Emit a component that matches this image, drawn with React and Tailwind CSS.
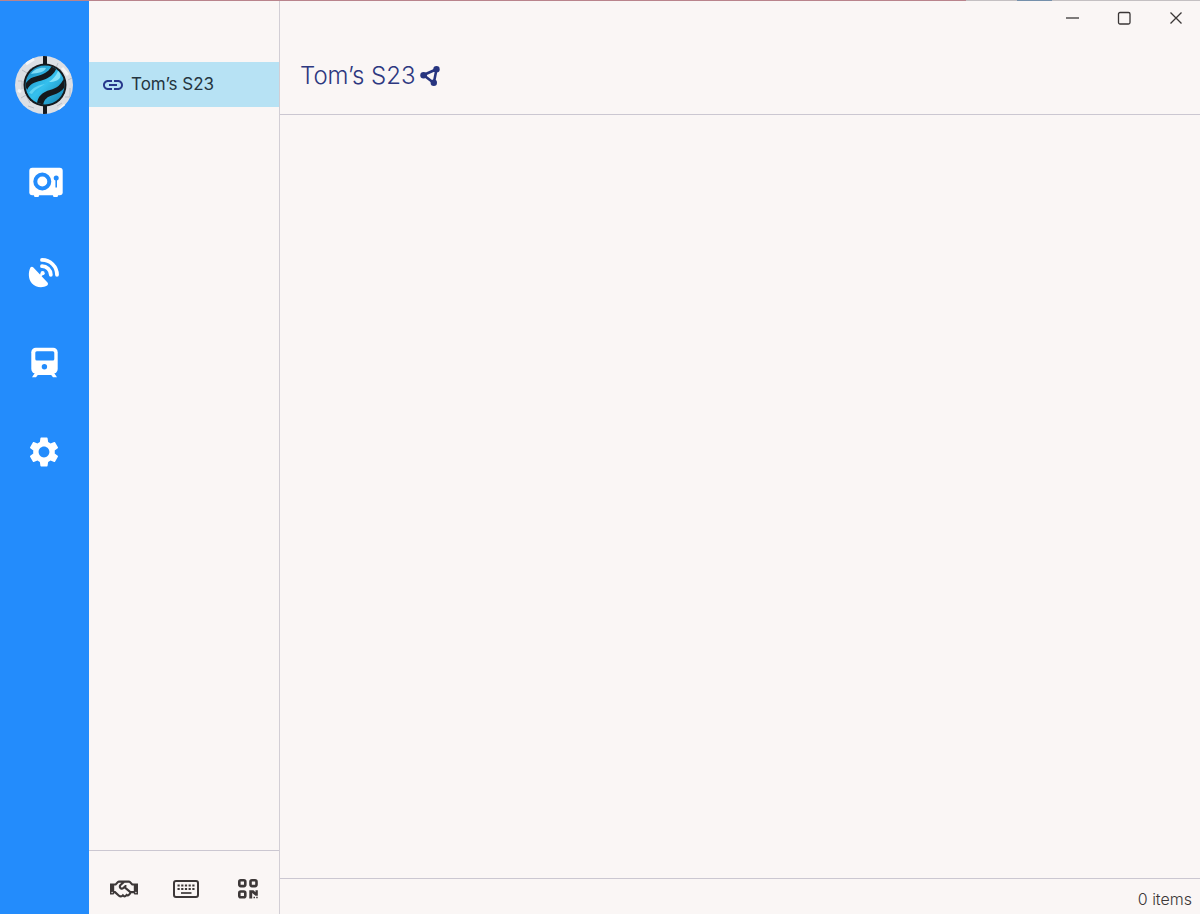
import { useState } from 'react'
import { FaRegHandshake } from 'react-icons/fa'
import { MdLink, MdSettings } from 'react-icons/md'

function Avatar() {
  return (
    <svg viewBox="0 0 58 58" className="size-[58px]" aria-hidden="true">
      <defs>
        <linearGradient id="orb" x1="0" y1="0" x2="1" y2="1">
          <stop offset="0" stopColor="#1687b8" />
          <stop offset="0.5" stopColor="#35c0ee" />
          <stop offset="1" stopColor="#127dac" />
        </linearGradient>
        <clipPath id="disc">
          <circle cx="29" cy="29" r="29" />
        </clipPath>
        <clipPath id="ball">
          <circle cx="30" cy="29" r="19.5" />
        </clipPath>
      </defs>
      <g clipPath="url(#disc)">
        <rect width="58" height="58" fill="#dcdfe4" />
        <path d="M7 14l5 3 4-5M3 25h4v8M6 42l5-3 4 8M43 7l-2 5 8 3M53 24l4-2M55 32v9h-5M42 50l5-3M13 50l6 2" fill="none" stroke="#b9bdc5" strokeWidth="1" />
        <path d="M11 8l8-5M3 34l3 2M47 12l6 7M44 54l6-5" stroke="#f4f5f7" strokeWidth="3" />
        <rect x="28" y="0" width="4" height="58" fill="#15191d" />
      </g>
      <circle cx="30" cy="29" r="21.5" fill="#15191d" />
      <g clipPath="url(#ball)">
        <rect x="10" y="9" width="40" height="40" fill="url(#orb)" />
        <path d="M10 29C14 20 22 21 28 18C32 16 35 14 37 9L42 11C39 19 34 22 28 24C22 26 16 26 12 34Z" fill="#15191d" />
        <path d="M22 49C22 40 28 36 35 34C42 32 46 29 49 22L52 27C49 34 44 37 38 39C32 41 29 43 28 50Z" fill="#15191d" />
        <path d="M16 18c3-5 9-7 15-6-1 4-8 5-15 6Z" fill="#7fdcf7" />
        <path d="M34 26c4-3 7-6 9-11 5 4 3 11-9 11Z" fill="#83e3fb" />
        <path d="M14 37c4-6 10-8 16-9-4 3-9 4-13 10Z" fill="#61d2f3" />
      </g>
    </svg>
  )
}

function SafeIcon() {
  return (
    <svg viewBox="9 7 40 40" className="size-10" aria-hidden="true">
      <path d="M18.500 39h6l-1 3h-4zM37.500 39h6l-1 3h-4z" fill="#fff" />
      <rect x="14.300" y="12.700" width="33.400" height="27.600" rx="3" fill="#fff" />
      <circle cx="27.300" cy="26.500" r="7" fill="none" stroke="#238cfc" strokeWidth="4" />
      <circle cx="41.200" cy="23" r="2.500" fill="#238cfc" />
      <path d="M41.200 23v9.500" stroke="#238cfc" strokeWidth="1.600" />
    </svg>
  )
}

function DishIcon() {
  return (
    <svg viewBox="9 7 40 40" className="size-10" aria-hidden="true">
      <path d="M15.400 22.600C16.200 21.600 17.500 21.600 18.400 22.500L32.500 37.600C33.300 38.600 33.100 39.900 32.100 40.600C27.500 43.200 20.500 42.500 17 38.500C13.300 34.500 13 27.500 15.400 22.600Z" fill="#fff" />
      <path d="M23.500 33l4-4.500" stroke="#fff" strokeWidth="2.200" />
      <circle cx="27.600" cy="28.200" r="2.100" fill="#fff" />
      <path d="M27 14.900A14.900 14.900 0 0 1 42 29.800M27 21.200A8.800 8.800 0 0 1 35.800 29.800" fill="none" stroke="#fff" strokeWidth="3.800" strokeLinecap="round" />
    </svg>
  )
}

function TrainIcon() {
  return (
    <svg viewBox="9 7 40 40" className="size-10" aria-hidden="true">
      <path d="M20.500 37L17 42.200h4l1.800-2.200h13.400l1.800 2.200h4L38.500 37z" fill="#fff" />
      <rect x="16.300" y="12.700" width="26.400" height="25.800" rx="4.500" fill="#fff" />
      <rect x="20.300" y="16.300" width="19" height="9.300" rx="1.500" fill="#238cfc" />
      <circle cx="29.400" cy="31.800" r="2.700" fill="#238cfc" />
    </svg>
  )
}

function GearIcon() {
  return <MdSettings className="size-9 text-white" aria-hidden="true" />
}

function NodesIcon() {
  return (
    <svg viewBox="0 0 20 20" className="size-5 text-[#27347f]" aria-hidden="true">
      <path d="M3.500 9L16.500 3.200L13.800 17z" fill="none" stroke="currentColor" strokeWidth="2.600" />
      <circle cx="3.600" cy="9.200" r="3.300" fill="currentColor" />
      <circle cx="16.500" cy="3.300" r="3.200" fill="currentColor" />
      <circle cx="13.800" cy="16.700" r="3.200" fill="currentColor" />
    </svg>
  )
}

function KeyboardIcon() {
  return (
    <svg viewBox="0 0 26 18" className="h-[18px] w-[26px]" fill="none" stroke="currentColor" aria-hidden="true">
      <rect x="1" y="1" width="24" height="16" rx="2" strokeWidth="2" />
      <path d="M4.500 5.500h17M4.500 9h17" strokeWidth="2" strokeDasharray="2.200 1.500" />
      <path d="M8 13h10.500" strokeWidth="1.700" />
    </svg>
  )
}

function QrIcon() {
  return (
    <svg viewBox="0 0 20 20" className="size-5" fill="none" stroke="currentColor" aria-hidden="true">
      <g strokeWidth="2.600">
        <rect x="1.300" y="1.300" width="6" height="5.800" rx="1.500" />
        <rect x="12.500" y="1.300" width="6" height="5.800" rx="1.500" />
        <rect x="1.300" y="12.500" width="6" height="5.800" rx="1.500" />
      </g>
      <path d="M11.300 11.200h4.200l2 2v-2h2.300v5.500h-2.300l-3.300-2.600v5.400h-2.900z" fill="currentColor" stroke="none" />
      <path d="M15.500 18.500h1.500M18.200 18.500h1.500" strokeWidth="1.500" />
    </svg>
  )
}

const sections = [
  { id: 'vault', label: 'Vault', Icon: SafeIcon },
  { id: 'discover', label: 'Discover', Icon: DishIcon },
  { id: 'transfer', label: 'Transfer', Icon: TrainIcon },
  { id: 'settings', label: 'Settings', Icon: GearIcon },
]

const devices = [{ id: 1, name: 'Tom’s S23', items: 0 }]

function Sidebar() {
  return (
    <nav className="flex w-[89px] shrink-0 flex-col items-center bg-[#238cfc] pt-[55px] pr-0.5">
      <button type="button" aria-label="Profile">
        <Avatar />
      </button>
      <div className="mt-[23px] flex w-full flex-col">
        {sections.map(({ id, label, Icon }) => (
          <button key={id} type="button" aria-label={label} className="flex h-[90px] items-center justify-center">
            <Icon />
          </button>
        ))}
      </div>
    </nav>
  )
}

function DeviceList({ onSelect }) {
  return (
    <aside className="flex w-[191px] shrink-0 flex-col border-r border-[#d2ced5]">
      <ul className="flex-1 pt-[61px]">
        {devices.map((device) => (
          <li key={device.id}>
            <button
              type="button"
              onClick={() => onSelect(device)}
              className="flex h-[45px] w-full items-center gap-1.5 bg-[#b7e2f4] pl-3 text-[17px] text-[#253540]"
            >
              <MdLink className="size-6 text-[#27388c]" aria-hidden="true" />
              {device.name}
            </button>
          </li>
        ))}
      </ul>
      <div className="grid h-16 grid-cols-3 items-center justify-items-center border-t border-[#cbc7d1] pt-3 pl-1 text-[#3d3838]">
        <button type="button" aria-label="Pair device">
          <FaRegHandshake className="size-7" />
        </button>
        <button type="button" aria-label="Keyboard">
          <KeyboardIcon />
        </button>
        <button type="button" aria-label="QR code">
          <QrIcon />
        </button>
      </div>
    </aside>
  )
}

function WindowControls() {
  return (
    <div className="flex h-[34px] justify-end gap-1 text-[#3a3636]">
      <button type="button" aria-label="Minimize" className="flex w-12 items-center justify-center">
        <svg viewBox="0 0 14 14" className="size-3.5" stroke="currentColor" strokeWidth="1.300">
          <path d="M1 7h13" />
        </svg>
      </button>
      <button type="button" aria-label="Maximize" className="flex w-12 items-center justify-center">
        <svg viewBox="0 0 14 14" className="size-3.5" fill="none" stroke="currentColor" strokeWidth="1.300">
          <rect x="1.500" y="1.500" width="11.500" height="11.500" rx="1.500" />
        </svg>
      </button>
      <button type="button" aria-label="Close" className="flex w-12 items-center justify-center">
        <svg viewBox="0 0 14 14" className="size-3.5" stroke="currentColor" strokeWidth="1.300">
          <path d="M1.500 1.500l11 11M12.500 1.500l-11 11" />
        </svg>
      </button>
    </div>
  )
}

function App() {
  const [selected, setSelected] = useState(devices[0])

  return (
    <div className="flex min-h-screen flex-col bg-[#faf6f5] font-['Inter','Liberation_Sans',sans-serif]">
      {/* accent strip along the window edge */}
      <div className="flex h-px">
        <div className="grow-[966] bg-[#b9848c]" />
        <div className="grow-[51] bg-[#c4c0c2]" />
        <div className="grow-[35] bg-[#7590ab]" />
        <div className="grow-[148] bg-[#c4c0c2]" />
      </div>
      <div className="flex flex-1">
        <Sidebar />
        <DeviceList onSelect={setSelected} />
        <main className="flex min-w-0 flex-1 flex-col">
          <header className="border-b border-[#cbc7d1]">
            <WindowControls />
            <div className="flex h-[79px] items-center gap-1 px-5 pt-0.5">
              <h1 className="text-2xl font-light text-[#2d3880]">{selected.name}</h1>
              <button type="button" aria-label="Share">
                <NodesIcon />
              </button>
            </div>
          </header>
          <section className="flex-1" aria-label="Items" />
          <footer className="flex h-9 items-center justify-end border-t border-[#cbc7d1] px-2 pt-1 text-base font-light text-[#3b3737]">
            {selected.items} items
          </footer>
        </main>
      </div>
    </div>
  )
}

export default App
